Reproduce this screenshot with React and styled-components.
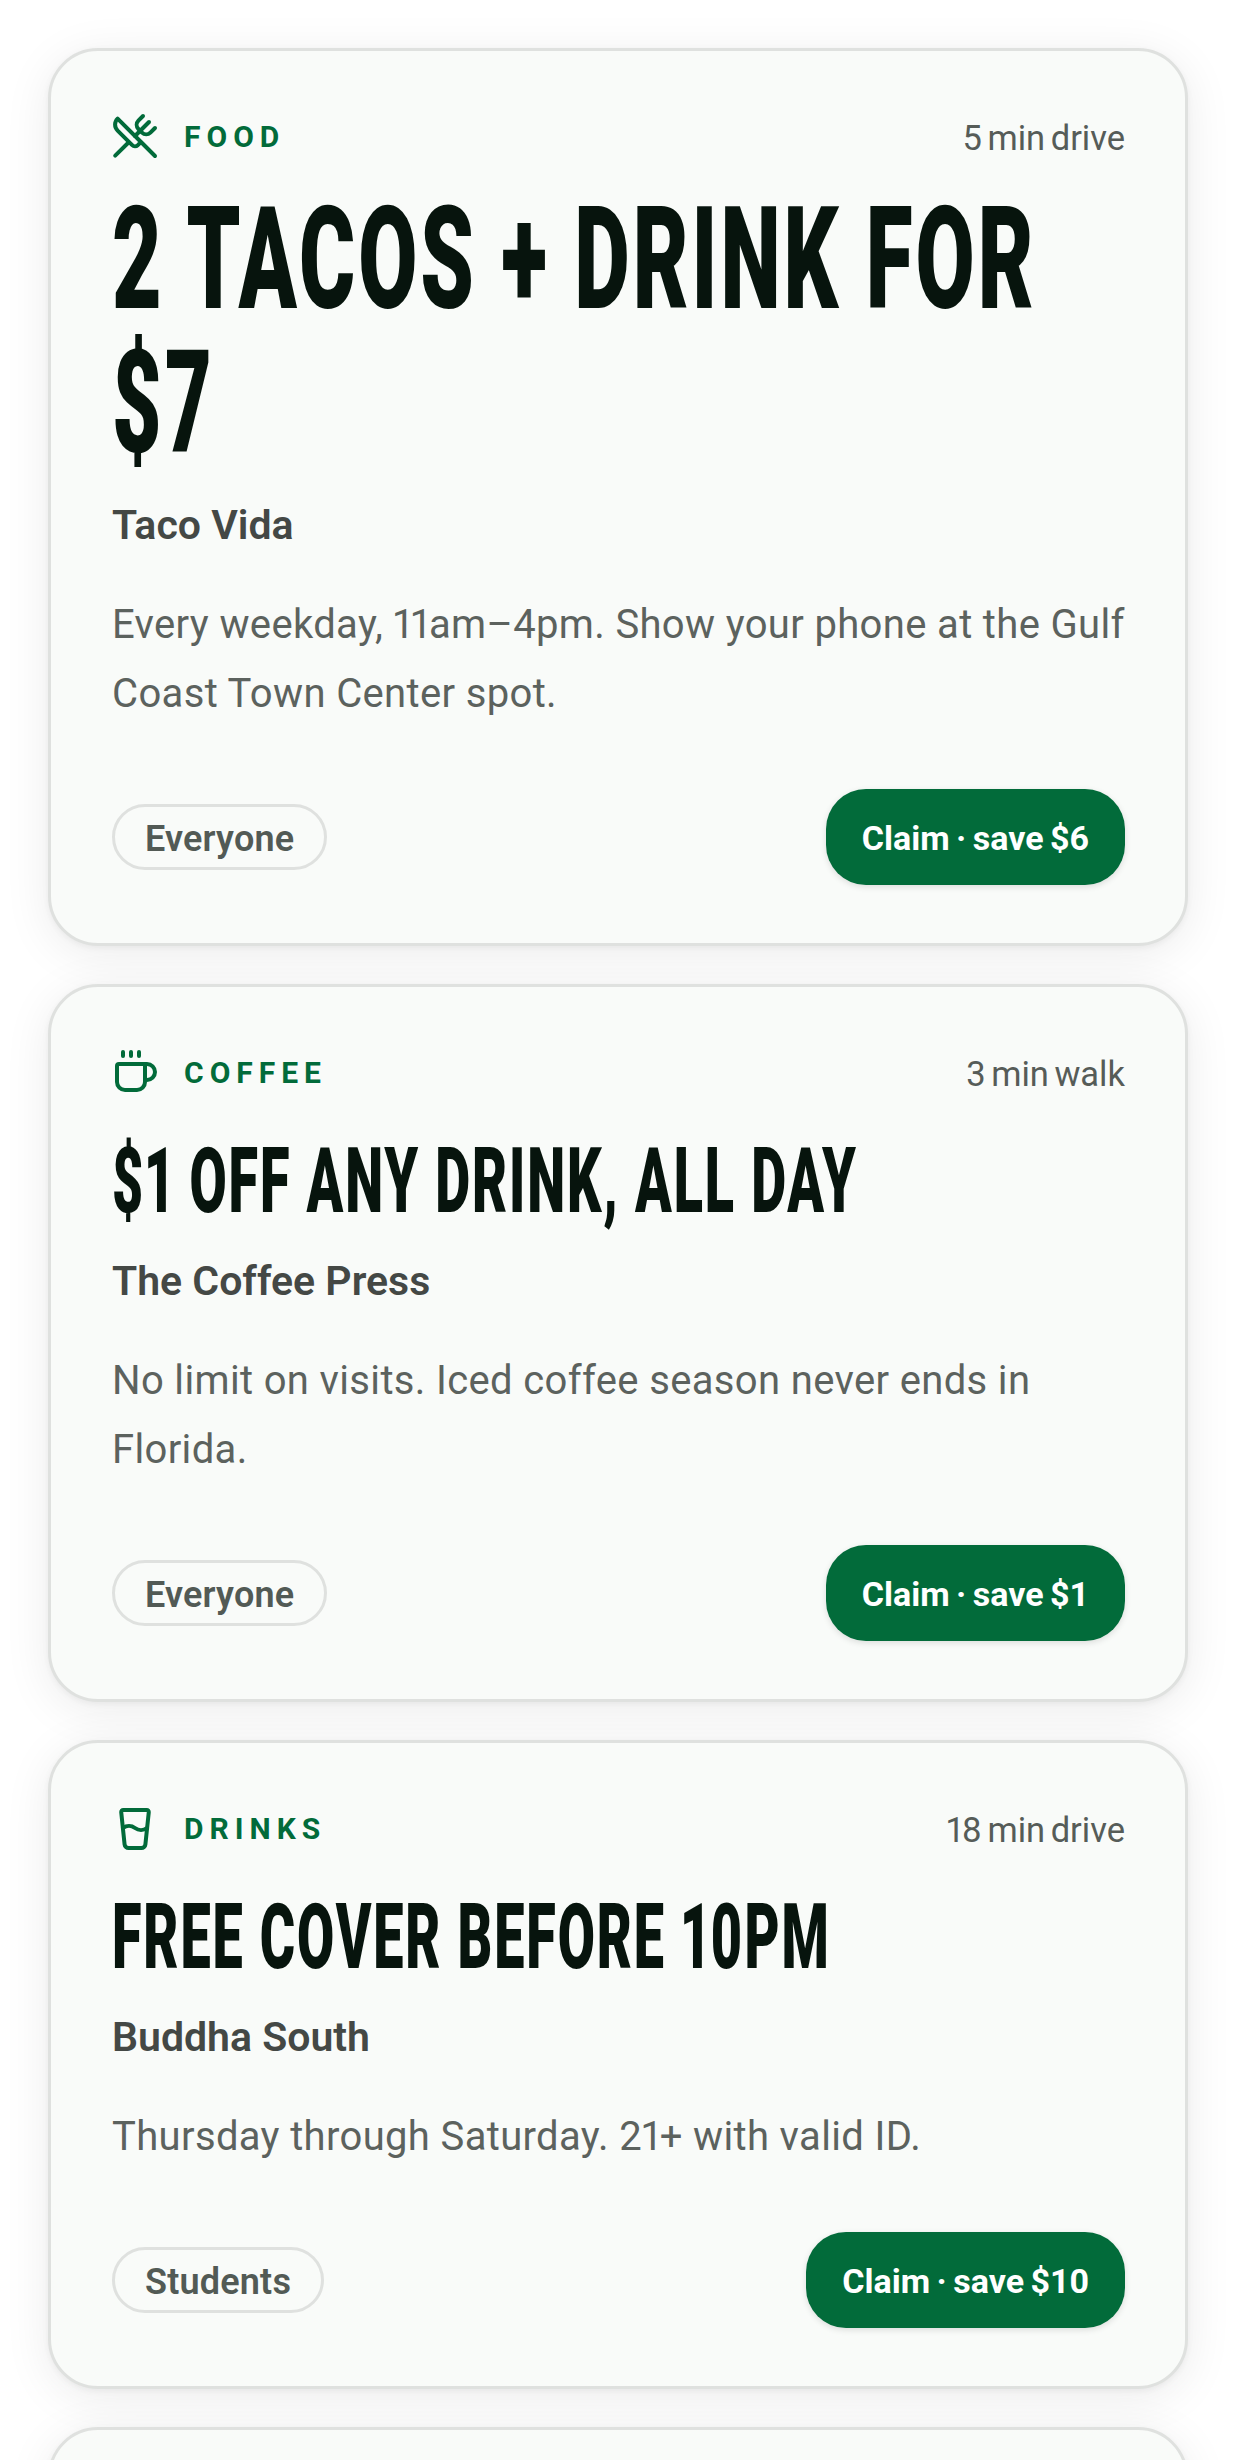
import styled, { createGlobalStyle } from "styled-components";
import { UtensilsCrossed, Coffee, GlassWater } from "lucide-react";

const GlobalStyle = createGlobalStyle`
  html, body {
    margin: 0;
    padding: 0;
    background: #ffffff;
  }
  * { box-sizing: border-box; }
`;

const Page = styled.div`
  height: 2460px;
  overflow: hidden;
  padding: 48px 48px 0;
  display: flex;
  flex-direction: column;
  gap: 38px;
  font-family: Roboto, "Liberation Sans", sans-serif;
  font-variant-numeric: proportional-nums;
`;

const Card = styled.article`
  flex: none;
  min-height: 200px;
  background: #f9fbf9;
  border: 3px solid #dfe1df;
  border-radius: 50px;
  padding: 61px 60px 58px 61px;
  box-shadow: 0 8px 47px rgba(0, 0, 0, 0.08), 0 2px 6px rgba(0, 0, 0, 0.05);
`;

const TopRow = styled.div`
  display: flex;
  align-items: center;
  justify-content: space-between;
  height: 48px;
`;

const Category = styled.div`
  display: flex;
  align-items: center;
  gap: 25px;
  margin-left: -1px;
  color: #026b3a;
  font-size: 30px;
  font-weight: 700;
  letter-spacing: 0.2em;
`;

const Eta = styled.span`
  font-size: 34.5px;
  color: #565c58;
  word-spacing: -3px;
  padding-top: 4px;
`;

// no Bebas Neue here, so squeeze a heavy face sideways
const TITLE_SQUEEZE = 0.6;

const Title = styled.h2`
  margin: ${({ $big }) => ($big ? "27px 0 -4px" : "41px 0 0")};
  width: calc(100% / ${TITLE_SQUEEZE});
  transform: scaleX(${TITLE_SQUEEZE});
  transform-origin: left top;
  font-weight: 900;
  font-size: ${({ $big }) => ($big ? "143px" : "90px")};
  line-height: ${({ $big }) => ($big ? "144px" : "90px")};
  letter-spacing: 0.034em;
  color: #07140d;
  text-transform: uppercase;
`;

const Venue = styled.div`
  margin-top: 27px;
  font-size: 41px;
  line-height: 54px;
  font-weight: 600;
  color: #444845;
`;

const Description = styled.p`
  margin: 38px 0 0;
  font-size: 40px;
  line-height: 69px;
  letter-spacing: 0.35px;
  color: #5c625e;
`;

const BottomRow = styled.div`
  margin-top: 61px;
  display: flex;
  align-items: center;
  justify-content: space-between;
`;

const Pill = styled.span`
  height: 66px;
  display: inline-flex;
  align-items: center;
  padding: 3px 30px 0;
  border: 3px solid #dfe1df;
  border-radius: 33px;
  font-size: 36px;
  font-weight: 600;
  letter-spacing: 0.2px;
  color: #525a55;
`;

const ClaimButton = styled.button`
  height: 96px;
  padding: 2px 36px 0;
  border: 0;
  border-radius: 40px;
  background: #026b3a;
  color: #ffffff;
  font-family: inherit;
  font-size: 34px;
  font-weight: 700;
  word-spacing: -2px;
  box-shadow: 0 2px 6px rgba(0, 0, 0, 0.12);
`;

const deals = [
  {
    id: "tacos",
    Icon: UtensilsCrossed,
    category: "Food",
    eta: "5 min drive",
    title: "2 tacos + drink for $7",
    big: true,
    venue: "Taco Vida",
    description:
      "Every weekday, 11am–4pm. Show your phone at the Gulf Coast Town Center spot.",
    audience: "Everyone",
    save: "$6",
  },
  {
    id: "coffee",
    Icon: Coffee,
    category: "Coffee",
    eta: "3 min walk",
    title: "$1 off any drink, all day",
    venue: "The Coffee Press",
    description: "No limit on visits. Iced coffee season never ends in Florida.",
    audience: "Everyone",
    save: "$1",
  },
  {
    id: "cover",
    Icon: GlassWater,
    category: "Drinks",
    eta: "18 min drive",
    title: "Free cover before 10pm",
    venue: "Buddha South",
    description: "Thursday through Saturday. 21+ with valid ID.",
    audience: "Students",
    save: "$10",
  },
  { id: "next", empty: true },
];

export default function App() {
  return (
    <>
      <GlobalStyle />
      <Page>
        {deals.map(({ id, empty, Icon, ...deal }) =>
          empty ? (
            <Card key={id} />
          ) : (
            <Card key={id}>
              <TopRow>
                <Category>
                  <Icon size={48} strokeWidth={2} />
                  <span>{deal.category.toUpperCase()}</span>
                </Category>
                <Eta>{deal.eta}</Eta>
              </TopRow>
              <Title $big={deal.big}>{deal.title}</Title>
              <Venue>{deal.venue}</Venue>
              <Description>{deal.description}</Description>
              <BottomRow>
                <Pill>{deal.audience}</Pill>
                <ClaimButton>Claim · save {deal.save}</ClaimButton>
              </BottomRow>
            </Card>
          )
        )}
      </Page>
    </>
  );
}
